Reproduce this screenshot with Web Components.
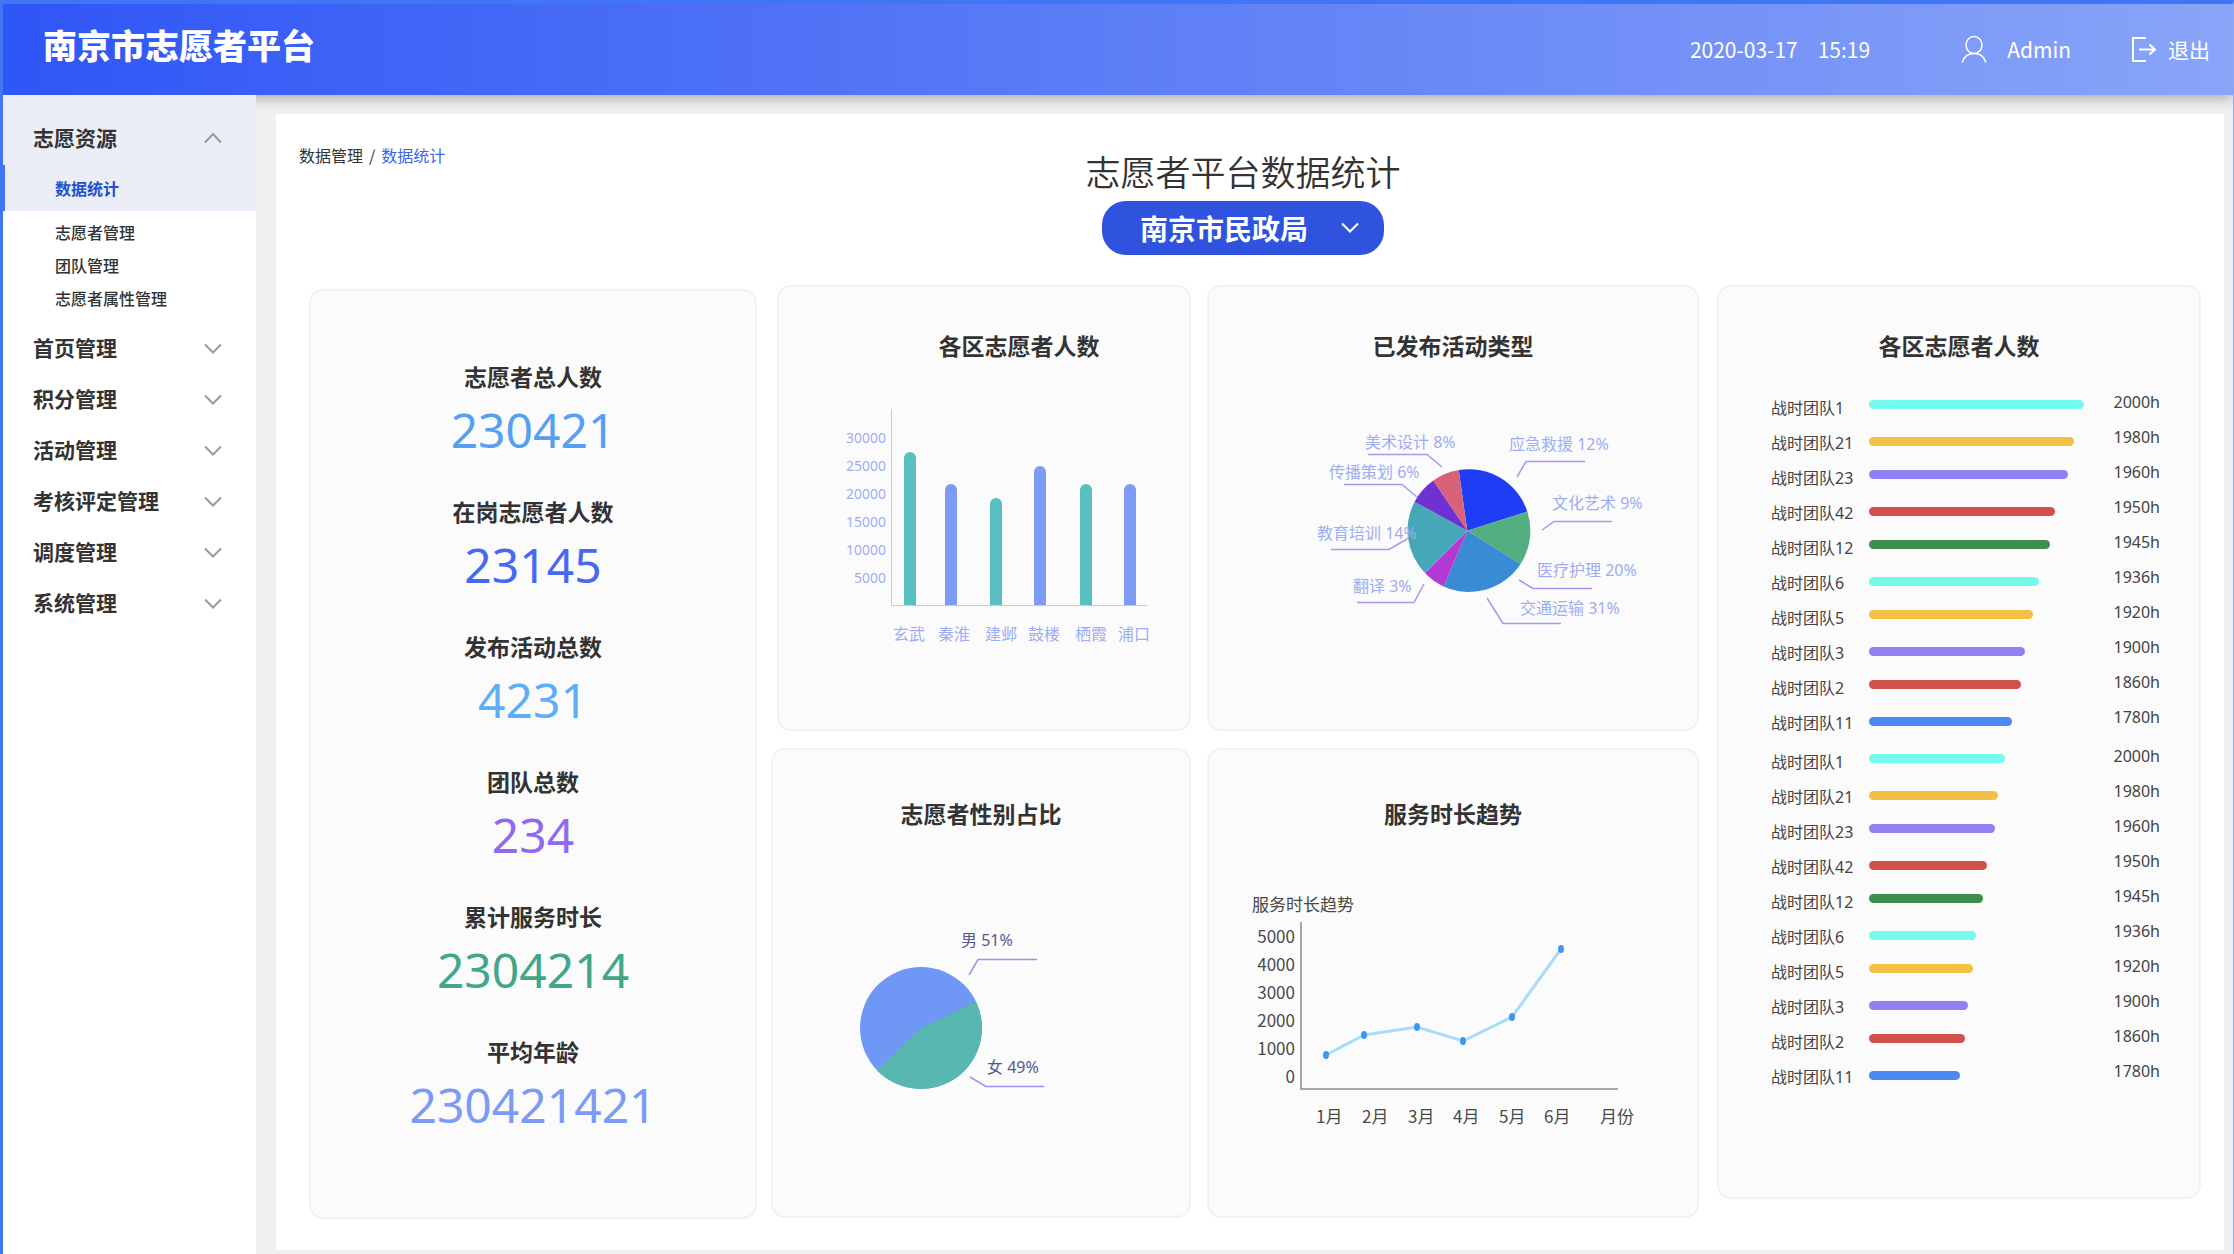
<!DOCTYPE html>
<html lang="zh-CN">
<head>
<meta charset="utf-8">
<title>南京市志愿者平台</title>
<style>
  html, body { margin: 0; }
  body {
    font-family: "Noto Sans", "Noto Sans CJK SC", sans-serif;
    font-size: 16px;
    color: #333;
    background: #f0f0f0;
    --cjk: "Noto Sans CJK SC", "Noto Sans", sans-serif;
  }
</style>
</head>
<body>
<volunteer-app>
  <app-header slot="header" date="2020-03-17" time="15:19" user="Admin">南京市志愿者平台</app-header>

  <side-nav slot="nav">
    <nav-group label="志愿资源" open>
      <nav-item active>数据统计</nav-item>
      <nav-item>志愿者管理</nav-item>
      <nav-item>团队管理</nav-item>
      <nav-item>志愿者属性管理</nav-item>
    </nav-group>
    <nav-group label="首页管理"></nav-group>
    <nav-group label="积分管理"></nav-group>
    <nav-group label="活动管理"></nav-group>
    <nav-group label="考核评定管理"></nav-group>
    <nav-group label="调度管理"></nav-group>
    <nav-group label="系统管理"></nav-group>
  </side-nav>

  <page-head parent="数据管理" current="数据统计" heading="志愿者平台数据统计">
    <org-select>南京市民政局</org-select>
  </page-head>

  <dash-board>
    <dash-card slot="stats">
      <stat-list>
        <stat-item label="志愿者总人数" value="230421" color="#569ff2"></stat-item>
        <stat-item label="在岗志愿者人数" value="23145" color="#4668f2"></stat-item>
        <stat-item label="发布活动总数" value="4231" color="#5fadf6"></stat-item>
        <stat-item label="团队总数" value="234" color="#9168f2"></stat-item>
        <stat-item label="累计服务时长" value="2304214" color="#42a78a"></stat-item>
        <stat-item label="平均年龄" value="230421421" color="#7b9bf5"></stat-item>
      </stat-list>
    </dash-card>
    <dash-card slot="district" heading="各区志愿者人数"><bar-chart></bar-chart></dash-card>
    <dash-card slot="types" heading="已发布活动类型"><type-pie></type-pie></dash-card>
    <dash-card slot="gender" heading="志愿者性别占比"><gender-pie></gender-pie></dash-card>
    <dash-card slot="trend" heading="服务时长趋势"><trend-chart></trend-chart></dash-card>
    <dash-card slot="ranking" heading="各区志愿者人数"><rank-list></rank-list></dash-card>
  </dash-board>
</volunteer-app>

<script>
const define = (name, render) => customElements.define(name, class extends HTMLElement {
  constructor() {
    super();
    this.attachShadow({ mode: 'open' });
  }
  connectedCallback() {
    this.shadowRoot.innerHTML = render(this);
  }
});

const range = (list, fn) => list.map(fn).join('');

/* ---------- shell ---------- */

define('volunteer-app', () => `
  <style>
    :host {
      display: grid;
      grid-template: auto 1fr / 253px minmax(0, 1fr);
      min-height: 100vh;
      box-sizing: border-box;
      border-top: 4px solid #4076f6;
      border-left: 3px solid #4076f6;
      border-right: 1px solid #8aa8f6;
    }
    header { grid-column: 1 / -1; position: relative; z-index: 1; }
    nav { background: #fff; position: relative; z-index: 2; }
    main { background: #fff; margin: 19px 9px 4px 20px; padding-bottom: 31px; }
  </style>
  <header><slot name="header"></slot></header>
  <nav aria-label="主导航"><slot name="nav"></slot></nav>
  <main><slot></slot></main>`);

define('app-header', el => `
  <style>
    :host {
      display: flex;
      align-items: center;
      height: 91px;
      padding: 0 23px 0 40px;
      color: #fff;
      font-family: var(--cjk);
      font-size: 21px;
      line-height: 30px;
      background: linear-gradient(90deg, #2f56f6, #4a6ef6 30%, #7391f7 75%, #88a5f8);
      box-shadow: 0 2px 14px rgba(0, 0, 0, .35);
      clip-path: inset(0 0 -20px 0);
    }
    h1 { margin: 0 auto 9px 0; font-size: 34px; line-height: 50px; font-weight: 900; }
    time, span { padding-bottom: 2px; }
    .date { display: flex; gap: 20px; margin-right: 91px; }
    .user { display: flex; align-items: center; gap: 20px; margin-right: 60px; }
    button {
      display: flex; align-items: center; gap: 11px;
      border: 0; padding: 0; background: none; color: inherit; font: inherit;
    }
    svg { display: block; fill: none; stroke: #fff; }
  </style>
  <h1><slot></slot></h1>
  <div class="date"><time>${el.getAttribute('date')}</time><time>${el.getAttribute('time')}</time></div>
  <div class="user">
    <svg width="26" height="30" viewBox="0 0 26 30" stroke-width="1.5" stroke-linecap="round" aria-hidden="true">
      <ellipse cx="13" cy="10" rx="8" ry="8.5"/><path d="M1.5 27C3 21.500 7 18.500 13 18.500S23 21.500 24.500 27"/>
    </svg>
    <span>${el.getAttribute('user')}</span>
  </div>
  <button type="button">
    <svg width="26" height="28" viewBox="0 0 26 28" stroke-width="2" aria-hidden="true">
      <path d="M15 2H2V25H15M8 13.500H24M18.500 8.500L24 13.500L18.500 18.500"/>
    </svg>
    <span>退出</span>
  </button>`);

/* ---------- sidebar ---------- */

define('side-nav', () => `
  <style>:host { display: block; }</style>
  <slot></slot>`);

define('nav-group', el => {
  const open = el.hasAttribute('open');
  return `
  <style>
    :host { display: block; }
    :host([open]) { padding-bottom: 7px; }
    button {
      display: flex; align-items: center; justify-content: space-between;
      width: 100%; height: 51px;
      border: 0; padding: 0 34px 0 30px;
      background: none; color: inherit;
      font: 700 21px/30px var(--cjk);
    }
    span { padding-bottom: 3px; }
    :host([open]) button { height: 70px; padding-top: 16px; background: #ebeef7; }
    svg { display: block; fill: none; stroke: #999; stroke-width: 2; }
  </style>
  <button type="button" aria-expanded="${open}">
    <span>${el.getAttribute('label')}</span>
    <svg width="18" height="12" viewBox="0 0 18 12" aria-hidden="true">
      <path d="${open ? 'M1 10.500L9 2L17 10.500' : 'M1 1.500L9 9.500L17 1.500'}"/>
    </svg>
  </button>
  <slot></slot>`;
});

define('nav-item', () => `
  <style>
    :host { display: block; }
    a {
      display: flex; align-items: center;
      box-sizing: border-box;
      height: 33px; padding: 0 0 3px 52px;
      color: #333; text-decoration: none;
      font: 500 16px/24px var(--cjk);
    }
    :host([active]) { padding-bottom: 6px; }
    :host([active]) a {
      height: 46px; padding: 0 0 0 50px;
      border-left: 2px solid #4076f6;
      background: #ebeef7; color: #2150d0; font-weight: 700;
    }
  </style>
  <a href="#"><slot></slot></a>`);

/* ---------- page heading ---------- */

define('page-head', el => `
  <style>
    :host {
      display: grid;
      grid-template-columns: 1fr auto 1fr;
      padding: 30px 37px 30px 23px;
    }
    nav { font: 400 16px/22px var(--cjk); }
    nav a { color: inherit; text-decoration: none; }
    nav a[aria-current] { color: #3c62ee; }
    .sep { margin: 0 6px; }
    .center { display: flex; flex-direction: column; align-items: center; gap: 10px; padding-top: 7px; }
    h2 { margin: 0; font: 350 35px/40px var(--cjk); }
  </style>
  <nav aria-label="面包屑">
    <a href="#">${el.getAttribute('parent')}</a><span class="sep">/</span><a href="#" aria-current="page">${el.getAttribute('current')}</a>
  </nav>
  <div class="center">
    <h2>${el.getAttribute('heading')}</h2>
    <slot></slot>
  </div>`);

define('org-select', el => `
  <style>
    :host { display: grid; align-items: center; }
    select, svg { grid-area: 1 / 1; }
    select {
      appearance: none;
      width: 282px; height: 54px;
      padding: 0 38px;
      border: 0; border-radius: 24px;
      background: #2f53de; color: #fff;
      font: 700 28px/40px var(--cjk);
    }
    svg { justify-self: end; margin-right: 25px; fill: none; stroke: #fff; stroke-width: 2; pointer-events: none; }
  </style>
  <select aria-label="选择单位"><option>${el.textContent.trim()}</option></select>
  <svg width="18" height="12" viewBox="0 0 18 12" aria-hidden="true"><path d="M1 1.500L9 9.500L17 1.500"/></svg>`);

/* ---------- dashboard ---------- */

define('dash-board', () => `
  <style>
    :host {
      display: grid;
      grid-template-columns: 448fr 14px 420fr 16px 492fr 18px 484fr;
      grid-template-rows: auto auto 1fr;
      align-items: start;
      padding: 0 23px 0 33px;
    }
    slot { display: block; }
    .stats { grid-area: 1 / 1 / 4 / 2; padding-top: 4px; }
    .district { grid-area: 1 / 3; padding-left: 6px; padding-bottom: 17px; --title-left: 70px; }
    .types { grid-area: 1 / 5; padding-bottom: 17px; }
    .gender { grid-area: 2 / 3; --card-top: 48px; }
    .trend { grid-area: 2 / 5; --card-top: 48px; }
    .ranking { grid-area: 1 / 7 / 4 / 8; }
  </style>
  <slot name="stats" class="stats"></slot>
  <slot name="district" class="district"></slot>
  <slot name="types" class="types"></slot>
  <slot name="gender" class="gender"></slot>
  <slot name="trend" class="trend"></slot>
  <slot name="ranking" class="ranking"></slot>`);

define('dash-card', el => `
  <style>
    :host {
      display: block;
      border: 2px solid #f2f2f2;
      border-radius: 14px;
      background: #fbfbfb;
    }
    h3 {
      margin: 0;
      padding: var(--card-top, 43px) 0 4px var(--title-left, 0);
      text-align: center;
      font: 700 23px/30px var(--cjk);
    }
  </style>
  ${el.hasAttribute('heading') ? `<h3>${el.getAttribute('heading')}</h3>` : ''}
  <slot></slot>`);

define('stat-list', () => `
  <style>
    :host { display: flex; flex-direction: column; gap: 31px; padding: 70px 0 77px; text-align: center; }
  </style>
  <slot></slot>`);

define('stat-item', el => `
  <style>
    :host { display: block; }
    h3 { margin: 0; padding-bottom: 4px; font: 700 23px/30px var(--cjk); }
    p { margin: 0; font-size: 48px; line-height: 70px; color: ${el.getAttribute('color')}; }
  </style>
  <h3>${el.getAttribute('label')}</h3>
  <p>${el.getAttribute('value')}</p>`);

/* ---------- charts ---------- */

define('bar-chart', () => {
  const teal = '#58c0c1', blue = '#7d9bf5';
  const ticks = [30000, 25000, 20000, 15000, 10000, 5000];
  const bars = [
    ['玄武', 125, 88, teal, 130], ['秦淮', 166, 120, blue, 175], ['建邺', 211, 134, teal, 222],
    ['鼓楼', 255, 102, blue, 265], ['栖霞', 301, 120, teal, 312], ['浦口', 345, 120, blue, 355]
  ];
  return `
  <style>
    :host { display: flex; justify-content: center; }
    svg { display: block; }
    text { fill: #9dadf3; font-size: 16px; }
    .tick { font-size: 14px; text-anchor: end; }
    .name { text-anchor: middle; }
  </style>
  <svg width="410" height="365" role="img" aria-label="各区志愿者人数">
    ${range(ticks, (t, i) => `<text class="tick" x="107" y="${79 + 28 * i}">${t}</text>`)}
    ${range(bars, ([n, x, y, c, tx]) => `
      <path d="M${x} 241V${y + 6}a6 6 0 0 1 12 0V241Z" fill="${c}"/>
      <text class="name" x="${tx}" y="276">${n}</text>`)}
    <path d="M112.500 45V241.500H368" fill="none" stroke="#c5c6ee"/>
  </svg>`;
});

define('type-pie', () => {
  const r = 61.4, apex = '258.3 166.7';
  const slices = [
    ['249.700 106', '318.300 147.500', '#1f3df4'],
    ['318.300 147.500', '311.500 200', '#53ae80'],
    ['311.500 200', '234.700 222.500', '#398bd4'],
    ['234.700 222.500', '216 209', '#b338d4'],
    ['216 209', '205.600 137.700', '#45a7b8'],
    ['205.600 137.700', '224.300 116.500', '#7031d3'],
    ['224.300 116.500', '249.700 106', '#d8627a']
  ];
  const labels = [
    ['美术设计 8%', 156, 78, '159,90.5 218,90.5 233,103'],
    ['传播策划 6%', 120, 108, '135,120.5 193,120.5 208,133'],
    ['教育培训 14%', 108, 169, '122,185.5 180,185.5 198,175'],
    ['翻译 3%', 144, 222, '148,238.5 205,238.5 215,220'],
    ['应急救援 12%', 300, 80, '308,113 317,97.5 376,97.5'],
    ['文化艺术 9%', 343, 139, '333,166 345,157.5 403,157.5'],
    ['医疗护理 20%', 328, 206, '310,216 324,224.5 383,224.5'],
    ['交通运输 31%', 311, 244, '278,234 294,259.5 352,259.5']
  ];
  return `
  <style>
    :host { display: flex; justify-content: center; }
    svg { display: block; }
    text { fill: #9dadf3; font-size: 16px; }
    polyline { fill: none; stroke: #a898ea; stroke-width: 1.5; }
  </style>
  <svg width="488" height="365" role="img" aria-label="已发布活动类型">
    ${range(slices, ([a, b, c]) => `<path d="M${apex}L${a}A${r} ${r} 0 0 1 ${b}Z" fill="${c}"/>`)}
    ${range(labels, ([t, x, y, p]) => `<polyline points="${p}"/><text x="${x}" y="${y + 6}">${t}</text>`)}
  </svg>`;
});

define('gender-pie', () => `
  <style>
    :host { display: flex; justify-content: center; }
    svg { display: block; }
    text { fill: #56578f; font-size: 16px; }
    polyline { fill: none; stroke: #a18ff0; stroke-width: 1.5; }
  </style>
  <svg width="416" height="384" role="img" aria-label="志愿者性别占比">
    <circle cx="148" cy="196" r="61" fill="#6f97f6"/>
    <path d="M148 196L203 169.600A61 61 0 0 1 104 238.200Z" fill="#58b7ae"/>
    <polyline points="196,143 205,127.500 264,127.500"/><text x="188" y="114">男 51%</text>
    <polyline points="197,245 213,254.500 271,254.500"/><text x="214" y="241">女 49%</text>
  </svg>`);

define('trend-chart', () => {
  const points = [[117, 223], [155, 203], [208, 195], [254, 209], [303, 185], [352, 117]];
  const months = [['1月', 107], ['2月', 153], ['3月', 199], ['4月', 244], ['5月', 290], ['6月', 335], ['月份', 391]];
  return `
  <style>
    :host { display: flex; justify-content: center; }
    svg { display: block; }
    text { fill: #4a4a4a; font-family: var(--cjk); font-size: 17px; }
    .tick { text-anchor: end; }
  </style>
  <svg width="488" height="384" role="img" aria-label="服务时长趋势">
    <text x="43" y="79">服务时长趋势</text>
    ${range([5000, 4000, 3000, 2000, 1000, 0], (t, i) => `<text class="tick" x="86" y="${111 + 28 * i}">${t}</text>`)}
    ${range(months, ([m, x]) => `<text x="${x}" y="291">${m}</text>`)}
    <path d="M92 90V257H409" fill="none" stroke="#8c8c8c" stroke-width="1.500"/>
    <polyline points="${points.join(' ')}" fill="none" stroke="#a9dcfa" stroke-width="3"/>
    ${range(points, ([x, y]) => `<ellipse cx="${x}" cy="${y}" rx="3" ry="4" fill="#3d97f1"/>`)}
  </svg>`;
});

define('rank-list', () => {
  const teams = [
    ['战时团队1', '2000h', '#74fbee', 215, 136], ['战时团队21', '1980h', '#f3bf45', 205, 129],
    ['战时团队23', '1960h', '#8f81f3', 199, 126], ['战时团队42', '1950h', '#d2504c', 186, 118],
    ['战时团队12', '1945h', '#3f8f4c', 181, 114], ['战时团队6', '1936h', '#74fbee', 170, 107],
    ['战时团队5', '1920h', '#f3bf45', 164, 104], ['战时团队3', '1900h', '#8f81f3', 156, 99],
    ['战时团队2', '1860h', '#d2504c', 152, 96], ['战时团队11', '1780h', '#4c87f3', 143, 91]
  ];
  const list = col => `<ol>${range(teams, t => `
    <li><span class="team">${t[0]}</span><i style="width:${t[col]}px;background:${t[2]}"></i><span class="hours">${t[1]}</span></li>`)}</ol>`;
  return `
  <style>
    :host { display: flex; flex-direction: column; gap: 4px; padding: 24px 39px 105px 52px; }
    ol { list-style: none; margin: 0; padding: 0; }
    li { display: flex; height: 35px; line-height: 29px; color: #444; }
    .team { width: 98px; padding-top: 6px; }
    i { height: 9px; margin-top: 12px; border-radius: 5px; }
    li:nth-child(even) i { margin-top: 14px; }
    .hours { margin-left: auto; }
  </style>
  ${list(3)}${list(4)}`;
});
</script>
</body>
</html>
